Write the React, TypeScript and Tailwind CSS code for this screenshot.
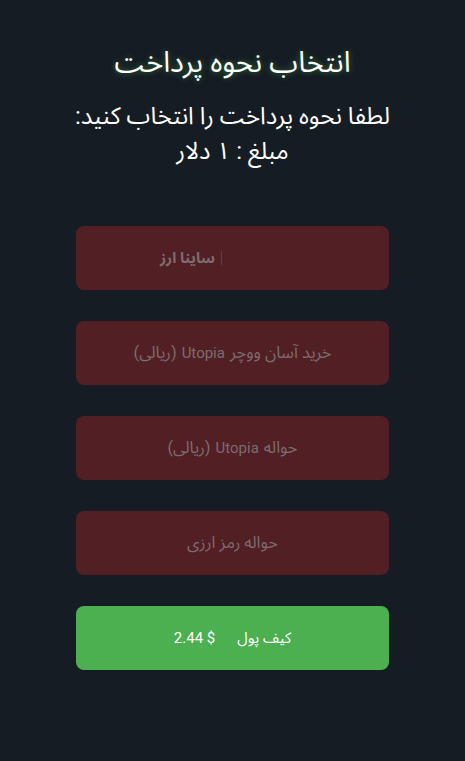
export default function App() {
  const methods = [
    { fa: 'خرید آسان ووچر', en: 'Utopia', tail: '(ریالی)' },
    { fa: 'حواله', en: 'Utopia', tail: '(ریالی)' },
    { fa: 'حواله رمز ارزی' },
  ]

  return (
    <div
      dir="rtl"
      className="min-h-[761px] w-full bg-[#151c23] text-white"
      style={{ fontFamily: 'Roboto, "Noto Sans Arabic", "Noto Sans Arabic UI", "Noto Naskh Arabic", "DejaVu Sans", sans-serif' }}
    >
      <div className="flex flex-col items-center pt-[42px]">
        <h1 className="text-[29px] leading-[40px] [text-shadow:0_0_6px_rgba(76,175,80,0.6)]">انتخاب نحوه پرداخت</h1>
        <p className="mt-[17px] text-[24px] leading-[35px]">لطفا نحوه پرداخت را انتخاب کنید:</p>
        <p className="text-[24px] leading-[35px]">مبلغ : ۱ دلار</p>
      </div>

      <div className="mx-auto mt-[57px] flex w-[313px] flex-col gap-[31px]">
        {/* first method, with missing logo next to the name */}
        <button className="flex h-[64px] items-center justify-center gap-[6px] rounded-lg bg-[#521f24] text-[15px] font-bold text-[#7b6d70]">
          <span className="h-[14px] w-[84px] border-l border-[#6a3a40]" />
          <span>ساینا ارز</span>
        </button>

        {methods.map((m) => (
          <button
            key={m.fa}
            className="flex h-[64px] items-center justify-center gap-[5px] rounded-lg bg-[#521f24] text-[16.5px] text-[#7b6d70]"
          >
            <span>{m.fa}</span>
            {m.en && <span className="text-[15px]">{m.en}</span>}
            {m.tail && <span>{m.tail}</span>}
          </button>
        ))}

        <button dir="ltr" className="flex h-[64px] items-center justify-center gap-[22px] rounded-lg bg-[#4caf50] text-[15px] text-white">
          <span>2.44 $</span>
          <span>کیف پول</span>
        </button>
      </div>
    </div>
  )
}
